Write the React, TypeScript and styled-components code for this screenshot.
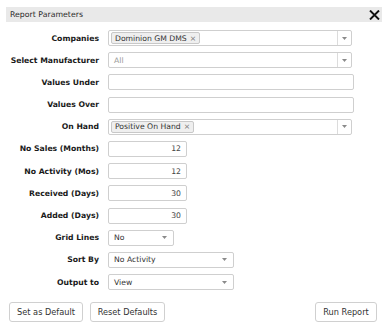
import React from "react";
import styled, { createGlobalStyle } from "styled-components";

const Global = createGlobalStyle`
  html, body { margin: 0; padding: 0; background: #fff; }
  body { font-family: "DejaVu Sans", Verdana, sans-serif; color: #333; }
`;

const Dialog = styled.div`
  width: 382px;
  height: 325px;
  box-sizing: border-box;
  padding-top: 7px;
  display: flex;
  flex-direction: column;
  background: #fff;
`;

const TitleBar = styled.div`
  margin-left: 6px;
  height: 15px;
  background: #e9e9e9;
  display: flex;
  align-items: center;
  justify-content: space-between;
  padding: 0 2px 0 4px;
`;

const Title = styled.span`
  font-size: 7.8px;
  color: #2a2a2a;
`;

const Close = styled.button`
  border: none;
  background: none;
  padding: 0;
  width: 11px;
  height: 11px;
  display: flex;
  align-items: center;
  justify-content: center;
`;

const Form = styled.div`
  margin-top: 8px;
  display: grid;
  grid-template-columns: 91px 1fr;
  column-gap: 9px;
  row-gap: 6.2px;
  padding-left: 8px;
  align-items: center;
`;

const Label = styled.label`
  font-size: 7.7px;
  font-weight: bold;
  color: #1a1a1a;
  text-align: right;
  white-space: nowrap;
`;

const Box = styled.div<{ $w: number; $align?: string }>`
  width: ${(p) => p.$w}px;
  height: 16px;
  box-sizing: border-box;
  border: 1px solid #cfcfcf;
  border-radius: 2px;
  background: #fff;
  display: flex;
  align-items: center;
  font-size: 7.7px;
  color: #333;
  justify-content: ${(p) => p.$align || "flex-start"};
  position: relative;
`;

const Value = styled.span<{ $muted?: boolean }>`
  padding: 0 5px;
  color: ${(p) => (p.$muted ? "#999" : "#333")};
  flex: 1;
  white-space: nowrap;
`;

const NumValue = styled.span`
  padding-right: 5px;
  color: #444;
`;

const Tags = styled.div`
  flex: 1;
  display: flex;
  align-items: center;
  padding-left: 2px;
`;

const Tag = styled.span`
  height: 12px;
  box-sizing: border-box;
  border: 1px solid #c8c8c8;
  border-radius: 2px;
  background: #efefef;
  display: inline-flex;
  align-items: center;
  padding: 0 3px;
  font-size: 7.7px;
  color: #333;
  white-space: nowrap;
`;

const TagX = styled.span`
  margin-left: 3px;
  color: #777;
`;

const ArrowCell = styled.div<{ $sep?: boolean }>`
  width: 13px;
  height: 100%;
  display: flex;
  align-items: center;
  justify-content: center;
  border-left: ${(p) => (p.$sep ? "1px solid #dcdcdc" : "none")};
  margin-right: ${(p) => (p.$sep ? "0" : "2px")};
`;

const Footer = styled.div`
  margin-top: 11.5px;
  display: flex;
  justify-content: space-between;
  padding: 0 5px 0 9px;
`;

const Group = styled.div`
  display: flex;
  gap: 7px;
`;

const Button = styled.button<{ $w: number }>`
  width: ${(p) => p.$w}px;
  height: 20px;
  box-sizing: border-box;
  border: 1px solid #d0d0d0;
  border-radius: 3px;
  background: #fff;
  font-family: "DejaVu Sans", Verdana, sans-serif;
  font-size: 8.2px;
  color: #333;
  padding: 0;
`;

const Arrow = () => (
  <svg width="5" height="3" viewBox="0 0 5 3">
    <path d="M0 0 L5 0 L2.5 3 Z" fill="#8a8a8a" />
  </svg>
);

type SelProps = { w: number; sep?: boolean; children: React.ReactNode };
const Select = ({ w, sep, children }: SelProps) => (
  <Box $w={w}>
    {children}
    <ArrowCell $sep={sep}>
      <Arrow />
    </ArrowCell>
  </Box>
);

const Num = ({ v }: { v: string }) => (
  <Box $w={79} $align="flex-end">
    <NumValue>{v}</NumValue>
  </Box>
);

export default function App() {
  return (
    <>
      <Global />
      <Dialog>
        <TitleBar>
          <Title>Report Parameters</Title>
          <Close aria-label="Close">
            <svg width="11" height="10" viewBox="0 0 11 10">
              <path d="M1 0.5 L10 9.5 M10 0.5 L1 9.5" stroke="#111" strokeWidth="1.9" />
            </svg>
          </Close>
        </TitleBar>
        <Form>
          <Label>Companies</Label>
          <Select w={244} sep>
            <Tags>
              <Tag>
                Dominion GM DMS<TagX>×</TagX>
              </Tag>
            </Tags>
          </Select>

          <Label>Select Manufacturer</Label>
          <Select w={244} sep>
            <Value $muted>All</Value>
          </Select>

          <Label>Values Under</Label>
          <Box $w={246} />

          <Label>Values Over</Label>
          <Box $w={246} />

          <Label>On Hand</Label>
          <Select w={244} sep>
            <Tags>
              <Tag>
                Positive On Hand<TagX>×</TagX>
              </Tag>
            </Tags>
          </Select>

          <Label>No Sales (Months)</Label>
          <Num v="12" />

          <Label>No Activity (Mos)</Label>
          <Num v="12" />

          <Label>Received (Days)</Label>
          <Num v="30" />

          <Label>Added (Days)</Label>
          <Num v="30" />

          <Label>Grid Lines</Label>
          <Select w={66}>
            <Value>No</Value>
          </Select>

          <Label>Sort By</Label>
          <Select w={126}>
            <Value>No Activity</Value>
          </Select>

          <Label>Output to</Label>
          <Select w={126}>
            <Value>View</Value>
          </Select>
        </Form>
        <Footer>
          <Group>
            <Button $w={74}>Set as Default</Button>
            <Button $w={75}>Reset Defaults</Button>
          </Group>
          <Button $w={62}>Run Report</Button>
        </Footer>
      </Dialog>
    </>
  );
}
